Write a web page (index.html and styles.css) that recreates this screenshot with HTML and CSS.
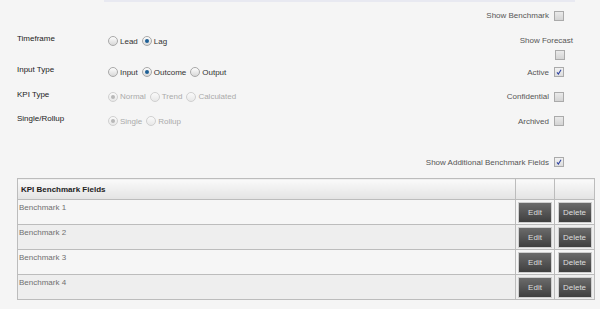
FILE: index.html
```html
<!DOCTYPE html>
<html lang="en">
<head>
    <meta charset="UTF-8">
    <title>KPI Settings</title>
    <link rel="stylesheet" href="styles.css">
</head>
<body>
    <div class="topbar"></div>

    <div class="settings">
        <div></div>
        <div></div>
        <div class="opt">Show Benchmark <span class="cb"></span></div>

        <div class="label">Timeframe</div>
        <div class="radios">
            <span class="rd"></span><span class="rt">Lead</span>
            <span class="rd on"></span><span class="rt">Lag</span>
        </div>
        <div class="opt stack"><span class="stack-text">Show Forecast</span><span class="cb"></span></div>

        <div class="label">Input Type</div>
        <div class="radios">
            <span class="rd"></span><span class="rt">Input</span>
            <span class="rd on"></span><span class="rt">Outcome</span>
            <span class="rd"></span><span class="rt">Output</span>
        </div>
        <div class="opt">Active <span class="cb checked"><svg viewBox="0 0 10 10"><path d="M2.5 5.5 L4.2 7.6 L7.6 2.2" fill="none" stroke="#2a3fa0" stroke-width="1.3"/></svg></span></div>

        <div class="label">KPI Type</div>
        <div class="radios off">
            <span class="rd on"></span><span class="rt">Normal</span>
            <span class="rd"></span><span class="rt">Trend</span>
            <span class="rd"></span><span class="rt">Calculated</span>
        </div>
        <div class="opt">Confidential <span class="cb"></span></div>

        <div class="label">Single/Rollup</div>
        <div class="radios off">
            <span class="rd on"></span><span class="rt">Single</span>
            <span class="rd"></span><span class="rt">Rollup</span>
        </div>
        <div class="opt">Archived <span class="cb"></span></div>
    </div>

    <div class="extra">
        <div class="opt">Show Additional Benchmark Fields <span class="cb checked"><svg viewBox="0 0 10 10"><path d="M2.5 5.5 L4.2 7.6 L7.6 2.2" fill="none" stroke="#2a3fa0" stroke-width="1.3"/></svg></span></div>
    </div>

    <div class="wrap">
        <table class="bench">
            <colgroup>
                <col>
                <col class="c-edit">
                <col class="c-del">
            </colgroup>
            <tr class="head">
                <th>KPI Benchmark Fields</th>
                <th></th>
                <th></th>
            </tr>
            <tr class="odd">
                <td>Benchmark 1</td>
                <td class="btncol"><button>Edit</button></td>
                <td class="btncol"><button>Delete</button></td>
            </tr>
            <tr class="even">
                <td>Benchmark 2</td>
                <td class="btncol"><button>Edit</button></td>
                <td class="btncol"><button>Delete</button></td>
            </tr>
            <tr class="odd">
                <td>Benchmark 3</td>
                <td class="btncol"><button>Edit</button></td>
                <td class="btncol"><button>Delete</button></td>
            </tr>
            <tr class="even">
                <td>Benchmark 4</td>
                <td class="btncol"><button>Edit</button></td>
                <td class="btncol"><button>Delete</button></td>
            </tr>
        </table>
    </div>
</body>
</html>
```

FILE: styles.css
```css
body {
    font-family: "Liberation Sans", Arial, sans-serif;
    font-size: 8px;
    margin: 0;
    padding: 0;
    background-color: #f5f5f5;
    color: #444;
}
.topbar {
    height: 2px;
    margin-left: 104px;
    width: 471px;
    background-color: #e8e9f1;
}
.settings {
    display: grid;
    grid-template-columns: 91px 1fr auto;
    grid-template-rows: 13px 38px 24px 25px 24px;
    padding: 7px 25px 0 17px;
}
.label {
    align-self: center;
    padding-bottom: 5px;
    color: #222;
}
.radios {
    display: flex;
    align-items: center;
    color: #333;
}
.radios.off {
    color: #aaa;
}
.rd {
    width: 8px;
    height: 8px;
    border: 1px solid #a8a8a8;
    border-radius: 50%;
    background: linear-gradient(#fdfdfd, #d8d8d8);
    margin-right: 2px;
    position: relative;
}
.rd.on::after {
    content: "";
    position: absolute;
    left: 2px;
    top: 2px;
    width: 4px;
    height: 4px;
    border-radius: 50%;
    background: #1d5f95;
}
.off .rd {
    border-color: #d0d0d0;
    background: linear-gradient(#fafafa, #e8e8e8);
}
.off .rd.on::after {
    background: #b8b8b8;
}
.rt {
    margin-right: 4px;
}
.opt {
    display: flex;
    justify-content: flex-end;
    align-items: center;
    gap: 5px;
    padding-right: 11px;
    color: #555;
}
.opt.stack {
    flex-direction: column;
    align-items: flex-end;
    gap: 5px;
    padding-right: 2px;
}
.stack .cb {
    margin-right: 8px;
}
.cb {
    display: inline-block;
    width: 8px;
    height: 8px;
    border: 1px solid #aaa;
    background: linear-gradient(#eaeaea, #d4d4d4);
}
.cb.checked {
    background: linear-gradient(#f2f2f2, #dcdcdc);
}
.cb svg {
    display: block;
    width: 8px;
    height: 8px;
}
.extra {
    height: 14px;
    margin-top: 22px;
    padding-right: 25px;
    display: flex;
    justify-content: flex-end;
    align-items: center;
}
.wrap {
    padding: 9px 5px 0 17px;
}
.bench {
    width: 100%;
    table-layout: fixed;
    border-collapse: collapse;
    border: 1px solid #bcbcbc;
}
.c-edit {
    width: 39px;
}
.c-del {
    width: 40px;
}
.bench th {
    height: 20px;
    text-align: left;
    padding: 0 0 0 3px;
    font-weight: bold;
    color: #222;
    background: linear-gradient(#fafafa, #e3e3e3);
    border: 1px solid #bcbcbc;
    box-sizing: border-box;
}
.bench tr {
    height: 25px;
}
.bench tr.head {
    height: 21px;
}
.bench td {
    vertical-align: top;
    padding: 3px 0 0 1px;
    color: #707070;
    border: 1px solid #bcbcbc;
}
.bench td.btncol {
    padding: 0;
    vertical-align: middle;
    text-align: center;
}
.odd td {
    background-color: #f6f6f6;
}
.even td {
    background-color: #eeeeee;
}
.bench button {
    display: block;
    margin: 1px auto 0;
    width: 34px;
    height: 21px;
    font-family: "Liberation Sans", Arial, sans-serif;
    font-size: 8px;
    color: #dedede;
    background: linear-gradient(#6b6b6b, #3f3f3f);
    border: 1px solid #cfcfcf;
    padding: 0;
}
```
